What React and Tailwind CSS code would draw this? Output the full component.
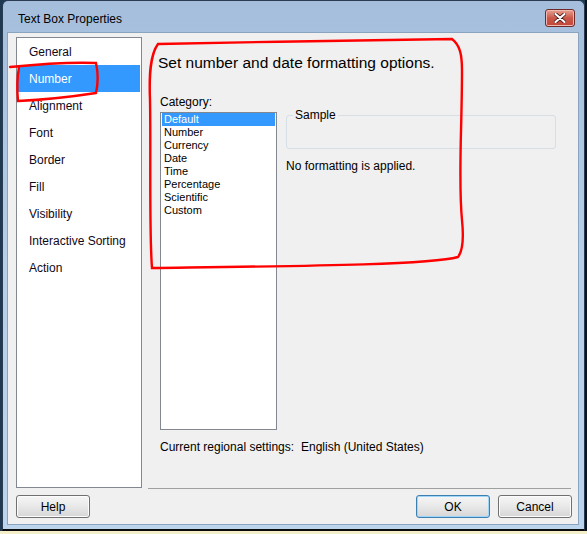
import React from 'react';

const navItems = ['General', 'Number', 'Alignment', 'Font', 'Border', 'Fill', 'Visibility', 'Interactive Sorting', 'Action'];
const categories = ['Default', 'Number', 'Currency', 'Date', 'Time', 'Percentage', 'Scientific', 'Custom'];

function DialogButton({ children, focused }) {
  return (
    <button
      className={
        'h-[23px] w-[74px] rounded-[3px] border bg-gradient-to-b from-[#f6f6f6] via-[#e8e8e8] to-[#d6d6d6] text-[12px] text-black ' +
        (focused ? 'border-[#3c7fb1] shadow-[inset_0_0_0_1px_#9fd5f8]' : 'border-[#707070] shadow-[inset_0_0_0_1px_#fcfcfc]')
      }
    >
      {children}
    </button>
  );
}

export default function App() {
  return (
    <div className="relative h-[534px] w-[587px] overflow-hidden bg-[#f4efc8] font-['Liberation_Sans',Arial,sans-serif]">
      <div className="h-[531px] border-r-2 border-[#0a1522] bg-[#1d3a52] pl-[2px]">
        <div className="flex h-full flex-col rounded-t-[6px] border border-b-2 border-[#2b3c52] border-b-[#0b0b0b] bg-gradient-to-b from-[#a4bedc] via-[#b7cfe8] to-[#bcd4ec] px-[4px] pb-[4px] pr-[5px]">
          {/* title bar */}
          <div className="flex h-[31px] shrink-0 items-center justify-between pl-[11px]">
            <span className="mt-[4px] text-[12px] text-black">Text Box Properties</span>
            <div className="mr-[4px] mt-[2px] flex h-[18px] w-[30px] items-center justify-center rounded-[3px] border border-[#6d2a2a] bg-gradient-to-b from-[#e7a192] via-[#c9584a] to-[#c2473a] shadow-[inset_0_0_0_1px_#f0b8ae]">
              <svg width="12" height="10" viewBox="0 0 12 10">
                <path d="M1.5 1 L10.5 9 M10.5 1 L1.5 9" stroke="#3b1010" strokeWidth="3.6" strokeLinecap="round" />
                <path d="M1.5 1 L10.5 9 M10.5 1 L1.5 9" stroke="#ffffff" strokeWidth="2.2" strokeLinecap="round" />
              </svg>
            </div>
          </div>

          {/* client area */}
          <div className="flex flex-1 flex-col border border-[#8aa4c0] bg-[#f0f0f0]">
            <div className="flex h-[456px]">
              {/* nav list */}
              <div className="ml-[8px] mt-[4px] h-[451px] w-[126px] border border-[#828790] bg-white text-[12px] text-[#100818]">
                {navItems.map((item) => (
                  <div
                    key={item}
                    className={
                      'mx-[1px] flex h-[27px] items-center pl-[11px] ' +
                      (item === 'Number' ? 'bg-[#3399ff] text-white' : '')
                    }
                  >
                    {item}
                  </div>
                ))}
              </div>

              {/* right panel */}
              <div className="ml-[6px] mr-[7px] flex flex-1 flex-col border-b border-[#a0a0a0]">
                <div className="mt-[20px] pl-[10px] text-[15.5px] leading-[20px] text-black">
                  Set number and date formatting options.
                </div>
                <div className="mt-[21px] pl-[12px] text-[12px] leading-[16px] text-black">Category:</div>
                <div className="mt-[2px] flex pl-[12px]">
                  <div className="h-[318px] w-[117px] border border-[#828790] bg-white text-[11px] leading-[13px] text-black">
                    {categories.map((c) => (
                      <div
                        key={c}
                        className={'mx-[1px] pl-[2px] ' + (c === 'Default' ? 'bg-[#3399ff] text-white' : '')}
                      >
                        {c}
                      </div>
                    ))}
                  </div>
                  <div className="ml-[9px] flex-1 pr-[8px]">
                    <div className="relative mt-[3px] h-[34px] w-[270px] rounded-[3px] border border-[#d5dfe5]">
                      <span className="absolute left-[6px] top-[-9px] bg-[#f0f0f0] px-[2px] text-[12px] leading-[16px] text-black">
                        Sample
                      </span>
                    </div>
                    <div className="mt-[9px] text-[12px] leading-[16px] text-black">No formatting is applied.</div>
                  </div>
                </div>
                <div className="mt-[9px] flex pl-[12px] text-[12px] leading-[16px] text-black">
                  <span className="w-[141px]">Current regional settings:</span>
                  <span>English (United States)</span>
                </div>
              </div>
            </div>

            {/* buttons */}
            <div className="mt-[6px] flex items-center pl-[8px] pr-[6px]">
              <DialogButton>Help</DialogButton>
              <div className="flex-1" />
              <DialogButton focused>OK</DialogButton>
              <div className="w-[8px]" />
              <DialogButton>Cancel</DialogButton>
            </div>
          </div>
        </div>
      </div>

      {/* red hand-drawn annotations */}
      <svg className="pointer-events-none absolute left-0 top-0" width="587" height="534" viewBox="0 0 587 534">
        <path
          d="M10 67 C 40 64, 70 62, 96 63 C 98 72, 98 84, 96 93 C 70 97, 40 100, 18 101 C 17 90, 17 78, 19 67"
          fill="none"
          stroke="#ff0000"
          strokeWidth="2.4"
          strokeLinecap="round"
        />
        <path
          d="M158 44 C 250 42, 380 40, 452 39 C 460 45, 462 55, 462 70 C 462 130, 458 180, 462 220 C 464 240, 462 252, 458 257 C 430 265, 300 266, 152 268 C 149 230, 151 150, 150 100 C 149 75, 150 55, 158 44 Z"
          fill="none"
          stroke="#ff0000"
          strokeWidth="2.4"
          strokeLinecap="round"
        />
      </svg>
    </div>
  );
}
